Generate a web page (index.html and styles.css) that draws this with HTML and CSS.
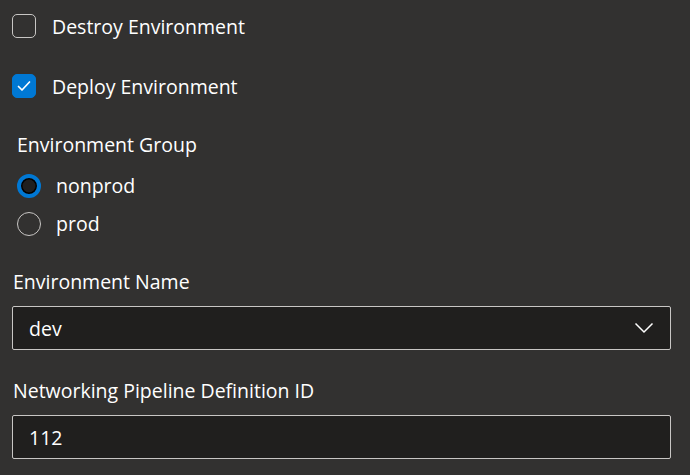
FILE: index.html
```html
<!DOCTYPE html>
<html lang="en">
<head>
<meta charset="utf-8">
<link rel="stylesheet" href="styles.css">
</head>
<body>
<div class="form">
  <label class="check-row first">
    <span class="checkbox"></span>
    <span class="check-text">Destroy Environment</span>
  </label>
  <label class="check-row second">
    <span class="checkbox checked">
      <svg width="18" height="18" viewBox="0 0 18 18"><path d="M3.5 9.5 L7 13 L14.5 5" fill="none" stroke="#ffffff" stroke-width="1.7" stroke-linecap="round" stroke-linejoin="round"/></svg>
    </span>
    <span class="check-text">Deploy Environment</span>
  </label>
  <div class="group">
    <div class="group-label">Environment Group</div>
    <div class="radio-row">
      <span class="radio selected"></span>
      <span class="radio-text">nonprod</span>
    </div>
    <div class="radio-row">
      <span class="radio"></span>
      <span class="radio-text">prod</span>
    </div>
  </div>
  <div class="field">
    <div class="field-label">Environment Name</div>
    <div class="box dropdown">
      <span class="box-text">dev</span>
      <svg class="chev" width="20" height="12" viewBox="0 0 20 12"><path d="M1.5 1.5 L10 10 L18.5 1.5" fill="none" stroke="#ffffff" stroke-width="1.5" stroke-linejoin="miter"/></svg>
    </div>
  </div>
  <div class="field">
    <div class="field-label">Networking Pipeline Definition ID</div>
    <div class="box">
      <span class="box-text">112</span>
    </div>
  </div>
</div>
</body>
</html>
```
FILE: styles.css
```css
html, body {
  margin: 0;
  padding: 0;
  background: #323130;
}
body {
  width: 690px;
  height: 475px;
  overflow: hidden;
  font-family: "Open Sans", "Noto Sans", sans-serif;
  font-size: 19.5px;
  color: #ffffff;
}
.form {
  display: flex;
  flex-direction: column;
  padding: 0 19px 0 12px;
}
.check-row {
  display: flex;
  align-items: center;
  height: 24px;
  gap: 16px;
}
.check-row.first { margin-top: 14px; }
.check-row.second { margin-top: 36px; }
.checkbox {
  box-sizing: border-box;
  width: 24px;
  height: 24px;
  border: 1px solid #c8c6c4;
  border-radius: 5px;
  display: flex;
  align-items: center;
  justify-content: center;
}
.checkbox.checked {
  background: #0078d4;
  border-color: #0078d4;
}
.check-text { line-height: 24px; margin-top: 2px; }
.group {
  margin-top: 35px;
  padding-left: 5px;
  display: flex;
  flex-direction: column;
}
.group-label {
  line-height: 24px;
  height: 24px;
}
.radio-row {
  display: flex;
  align-items: center;
  height: 24px;
  gap: 15px;
  margin-top: 17px;
}
.radio-row + .radio-row { margin-top: 14px; }
.radio {
  box-sizing: border-box;
  width: 24px;
  height: 24px;
  border-radius: 50%;
  border: 1px solid #c8c6c4;
}
.radio.selected {
  border: 4px solid #0078d4;
  background: #201f1e;
  box-shadow: inset 0 0 0 1.5px #000;
}
.radio-text { line-height: 24px; }
.field {
  display: flex;
  flex-direction: column;
  margin-top: 34px;
}
.field + .field { margin-top: 29px; }
.field-label {
  line-height: 24px;
  height: 24px;
  margin-left: 1px;
}
.box {
  box-sizing: border-box;
  margin-top: 12px;
  height: 44px;
  background: #201f1e;
  border: 1px solid #c8c6c4;
  border-radius: 2px;
  display: flex;
  align-items: center;
  justify-content: space-between;
  padding: 0 16px 0 16px;
}
.box-text { line-height: 24px; margin-top: 2px; }
.chev { display: block; }
```
